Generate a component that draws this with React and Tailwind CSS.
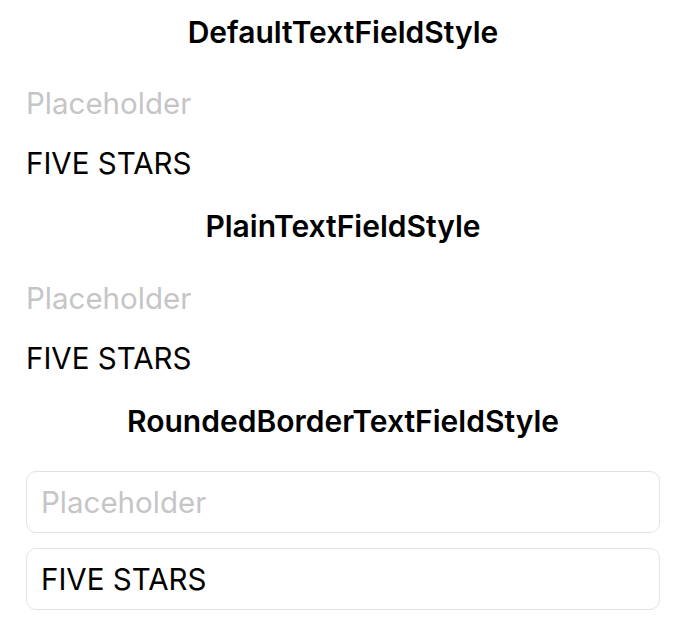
export default function App() {
  const font = { fontFamily: 'Inter, "Noto Sans", sans-serif' };
  return (
    <div className="w-[684px] h-[644px] bg-white text-black" style={font}>
      <div className="flex flex-col pl-[26px] pr-[24px] pt-[14px]">
        <h2 className="h-[36px] flex items-center justify-center text-[30px] font-semibold">
          DefaultTextFieldStyle
        </h2>
        <div className="mt-[23px] h-[60px] flex items-center text-[29.5px] text-[#c5c5c7]">
          Placeholder
        </div>
        <div className="h-[60px] flex items-center text-[29.5px]">FIVE STARS</div>

        <h2 className="mt-[15px] h-[36px] flex items-center justify-center text-[30px] font-semibold">
          PlainTextFieldStyle
        </h2>
        <div className="mt-[24px] h-[60px] flex items-center text-[29.5px] text-[#c5c5c7]">
          Placeholder
        </div>
        <div className="h-[60px] flex items-center text-[29.5px]">FIVE STARS</div>

        <h2 className="mt-[15px] h-[36px] flex items-center justify-center text-[30px] font-semibold">
          RoundedBorderTextFieldStyle
        </h2>
        <div className="mt-[32px] h-[62px] flex items-center px-[14px] border border-[#e3e3e3] rounded-[10px] text-[29.5px] text-[#c5c5c7]">
          Placeholder
        </div>
        <div className="mt-[15px] h-[62px] flex items-center px-[14px] border border-[#e3e3e3] rounded-[10px] text-[29.5px]">
          FIVE STARS
        </div>
      </div>
    </div>
  );
}
